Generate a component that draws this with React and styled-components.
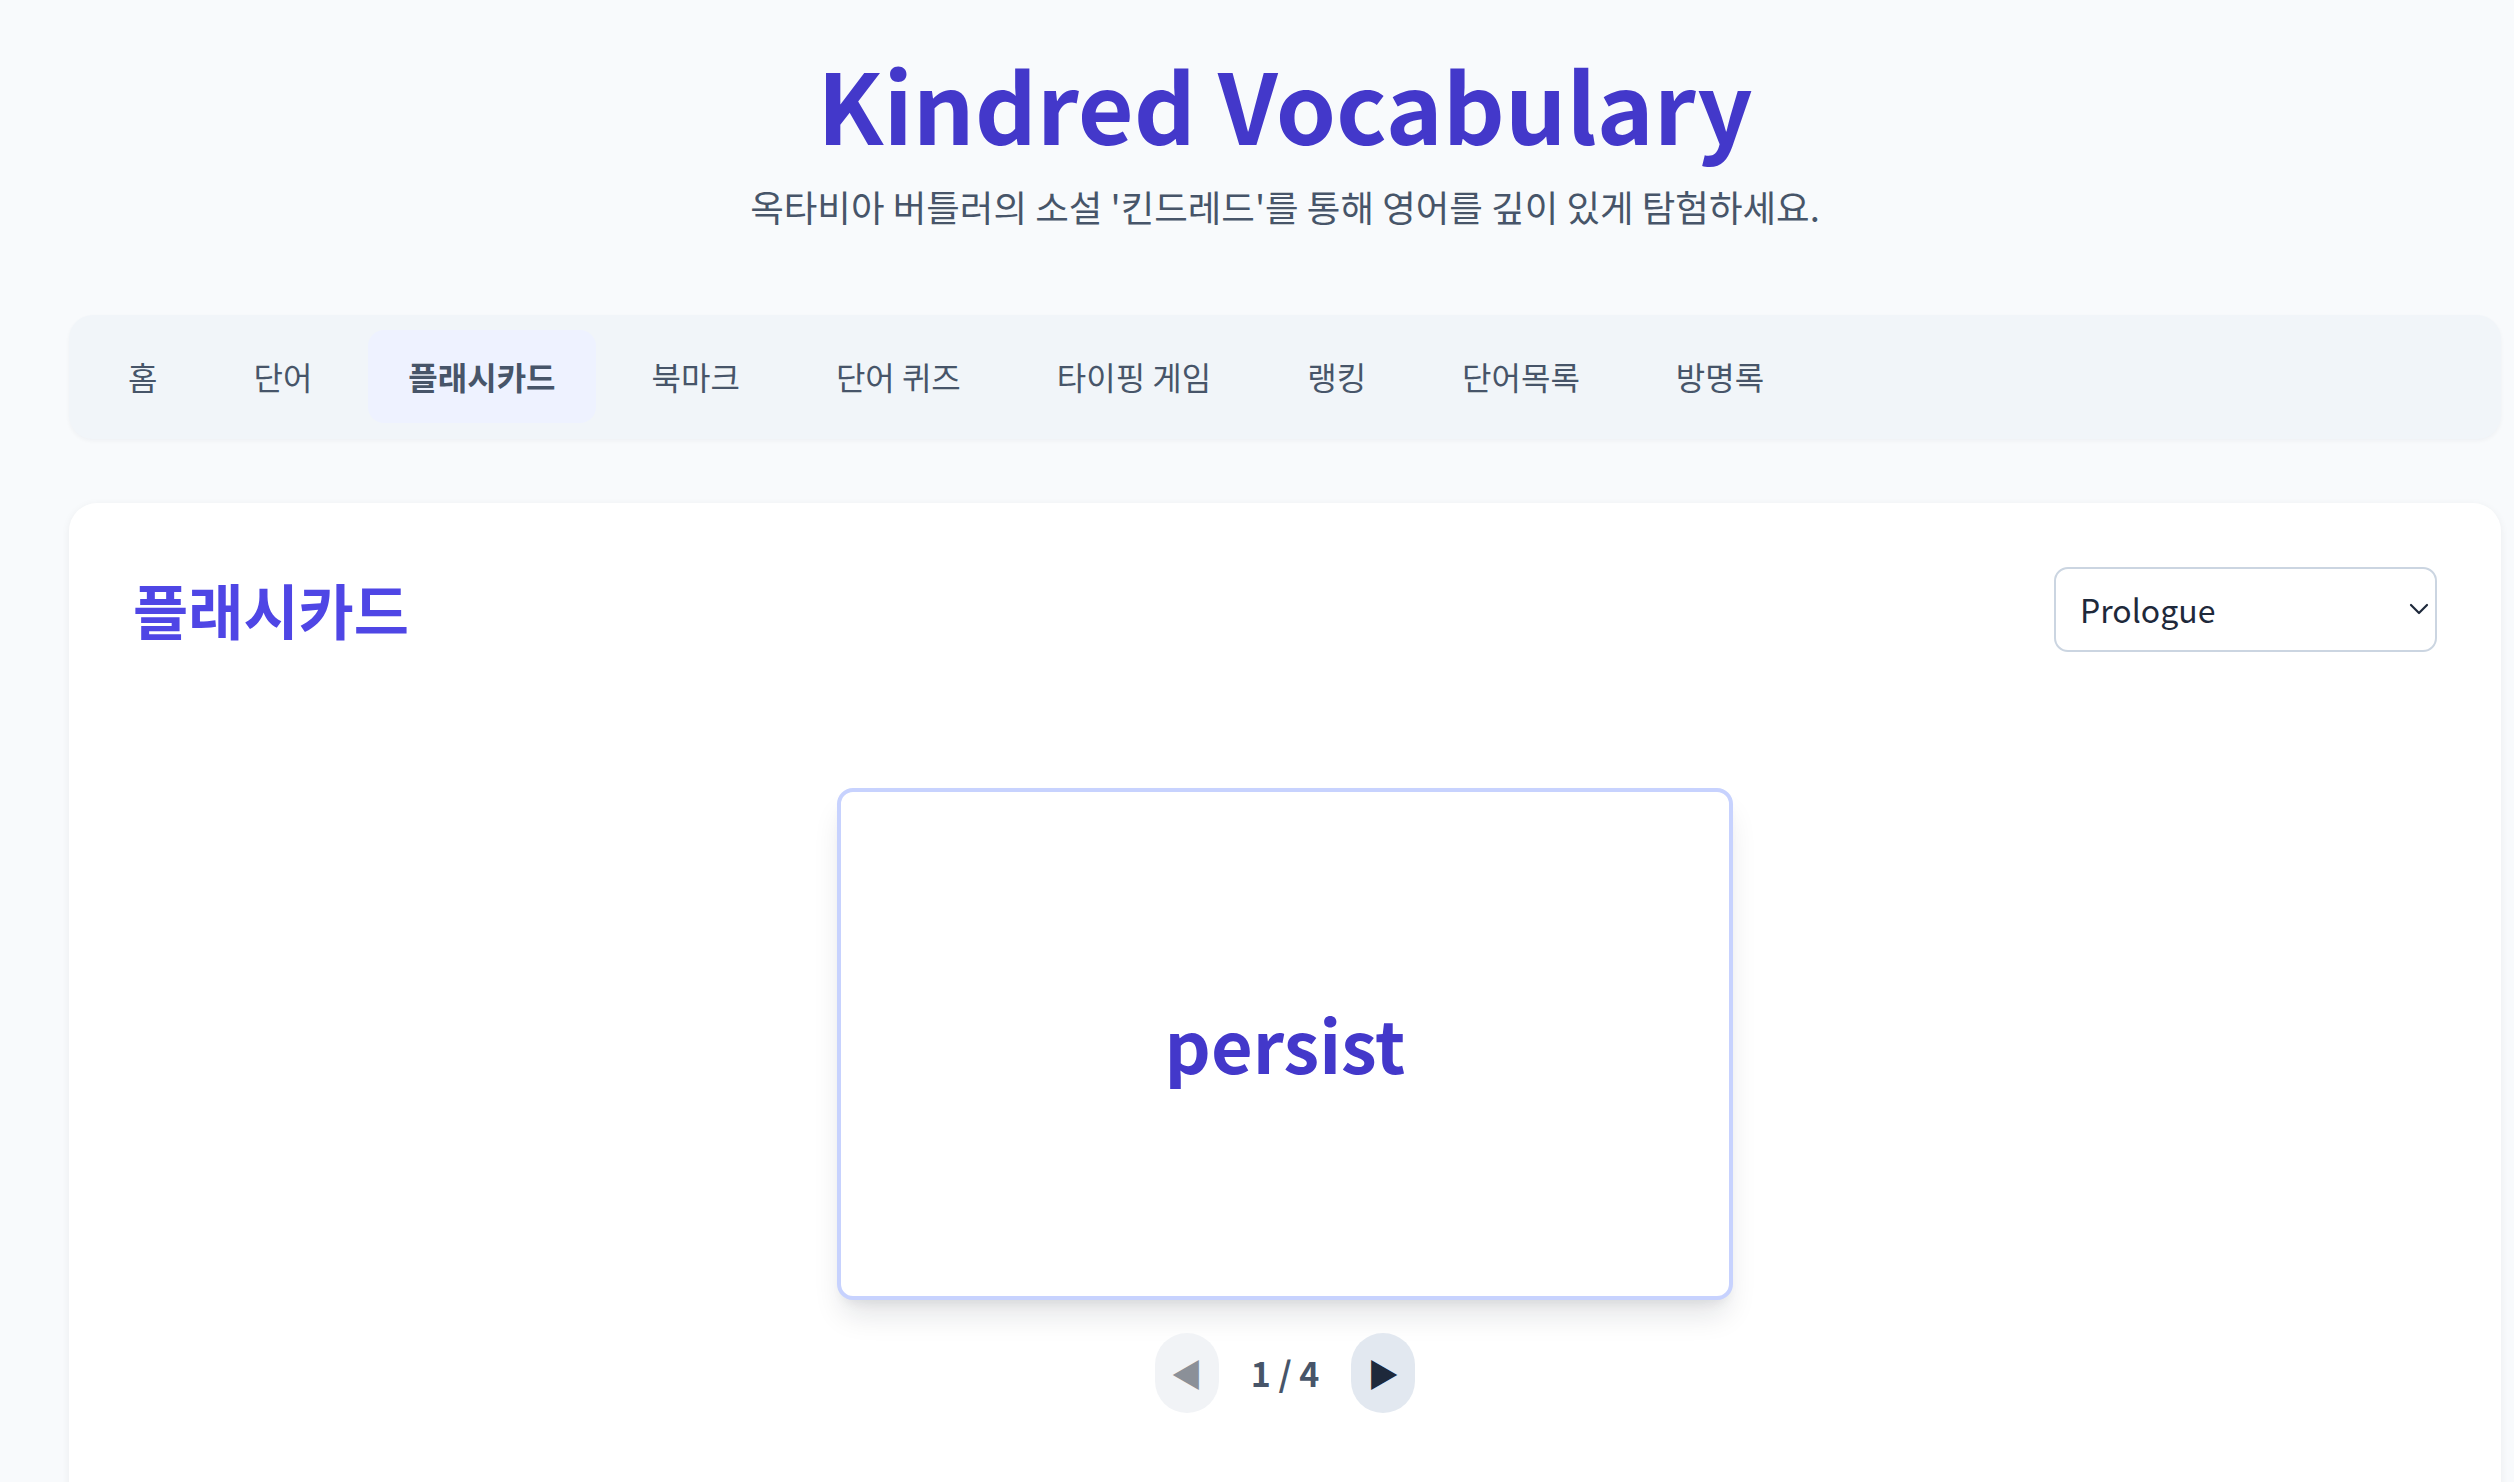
import React from "react";
import styled, { createGlobalStyle } from "styled-components";

const GlobalStyle = createGlobalStyle`
  html, body {
    margin: 0;
    padding: 0;
    background: #f8fafc;
    font-family: "Noto Sans CJK KR", "Noto Sans", sans-serif;
    color: #1e293b;
  }
  * { box-sizing: border-box; }
`;

const Page = styled.div`
  padding: 46px 13px 0 69px;
`;

const Header = styled.header`
  text-align: center;
`;

const Title = styled.h1`
  margin: 0;
  font-size: 96.5px;
  line-height: 1.2;
  font-weight: 700;
  color: #4338ca;
`;

const Subtitle = styled.p`
  margin: 18px 0 0;
  font-size: 36.5px;
  line-height: 1.5;
  color: #475569;
`;

const Nav = styled.nav`
  margin-top: 80px;
  display: flex;
  gap: 16px;
  padding: 15px 19px 16px;
  background: #f1f5f9;
  border-radius: 24px;
  box-shadow: 0 2px 4px rgba(15, 23, 42, 0.04);
`;

const NavItem = styled.a`
  display: block;
  padding: 24px 40px;
  font-size: 32px;
  line-height: 45px;
  border-radius: 16px;
  color: #475569;
  text-decoration: none;
  font-weight: ${(p) => (p.$active ? 700 : 400)};
  background: ${(p) => (p.$active ? "#eef2ff" : "transparent")};
`;

const Card = styled.main`
  margin-top: 64px;
  background: #ffffff;
  border-radius: 28px;
  padding: 64px 64px 120px;
  box-shadow: 0 2px 8px rgba(15, 23, 42, 0.06);
`;

const CardHeader = styled.div`
  display: flex;
  justify-content: space-between;
  align-items: center;
`;

const SectionTitle = styled.h2`
  margin: 0;
  font-size: 60px;
  line-height: 1.2;
  font-weight: 700;
  color: #4f46e5;
`;

const SelectWrap = styled.div`
  position: relative;
  width: 383px;
`;

const Select = styled.select`
  appearance: none;
  width: 100%;
  height: 85px;
  padding: 0 48px 0 24px;
  font-family: inherit;
  font-size: 32px;
  color: #1e293b;
  background: #ffffff;
  border: 2px solid #cbd5e1;
  border-radius: 14px;
  outline: none;
`;

const Chevron = styled.svg`
  position: absolute;
  right: 8px;
  top: 50%;
  transform: translateY(-50%);
  pointer-events: none;
`;

const Stage = styled.div`
  display: flex;
  flex-direction: column;
  align-items: center;
  margin-top: 136px;
`;

const FlashCard = styled.div`
  width: 896px;
  height: 512px;
  display: flex;
  align-items: center;
  justify-content: center;
  background: #ffffff;
  border: 4px solid #c7d2fe;
  border-radius: 16px;
  box-shadow: 0 20px 30px -6px rgba(15, 23, 42, 0.12), 0 8px 12px -6px rgba(15, 23, 42, 0.08);
`;

const Word = styled.div`
  font-size: 72px;
  font-weight: 700;
  color: #4338ca;
  line-height: 1.2;
`;

const Pager = styled.div`
  margin-top: 33px;
  display: flex;
  align-items: center;
  gap: 32px;
`;

const PagerButton = styled.button`
  width: 64px;
  height: 80px;
  padding: 0;
  border: none;
  border-radius: 9999px;
  display: flex;
  align-items: center;
  justify-content: center;
  font-family: inherit;
  font-size: 32px;
  line-height: 1;
  background: ${(p) => (p.disabled ? "#f1f3f6" : "#e2e8f0")};
  color: ${(p) => (p.disabled ? "#8b9098" : "#1e293b")};
`;

const Counter = styled.span`
  font-size: 34px;
  font-weight: 600;
  color: #475569;
`;

const navItems = ["홈", "단어", "플래시카드", "북마크", "단어 퀴즈", "타이핑 게임", "랭킹", "단어목록", "방명록"];

export default function App() {
  return (
    <>
      <GlobalStyle />
      <Page>
        <Header>
          <Title>Kindred Vocabulary</Title>
          <Subtitle>옥타비아 버틀러의 소설 '킨드레드'를 통해 영어를 깊이 있게 탐험하세요.</Subtitle>
        </Header>
        <Nav>
          {navItems.map((item) => (
            <NavItem key={item} $active={item === "플래시카드"}>
              {item}
            </NavItem>
          ))}
        </Nav>
        <Card>
          <CardHeader>
            <SectionTitle>플래시카드</SectionTitle>
            <SelectWrap>
              <Select defaultValue="Prologue">
                <option>Prologue</option>
                <option>The River</option>
                <option>The Fire</option>
              </Select>
              <Chevron width="20" height="12" viewBox="0 0 20 12" fill="none">
                <path d="M2 2l8 8 8-8" stroke="#1e293b" strokeWidth="2.2" strokeLinecap="round" strokeLinejoin="round" />
              </Chevron>
            </SelectWrap>
          </CardHeader>
          <Stage>
            <FlashCard>
              <Word>persist</Word>
            </FlashCard>
            <Pager>
              <PagerButton disabled>◀</PagerButton>
              <Counter>1 / 4</Counter>
              <PagerButton>▶</PagerButton>
            </Pager>
          </Stage>
        </Card>
      </Page>
    </>
  );
}
